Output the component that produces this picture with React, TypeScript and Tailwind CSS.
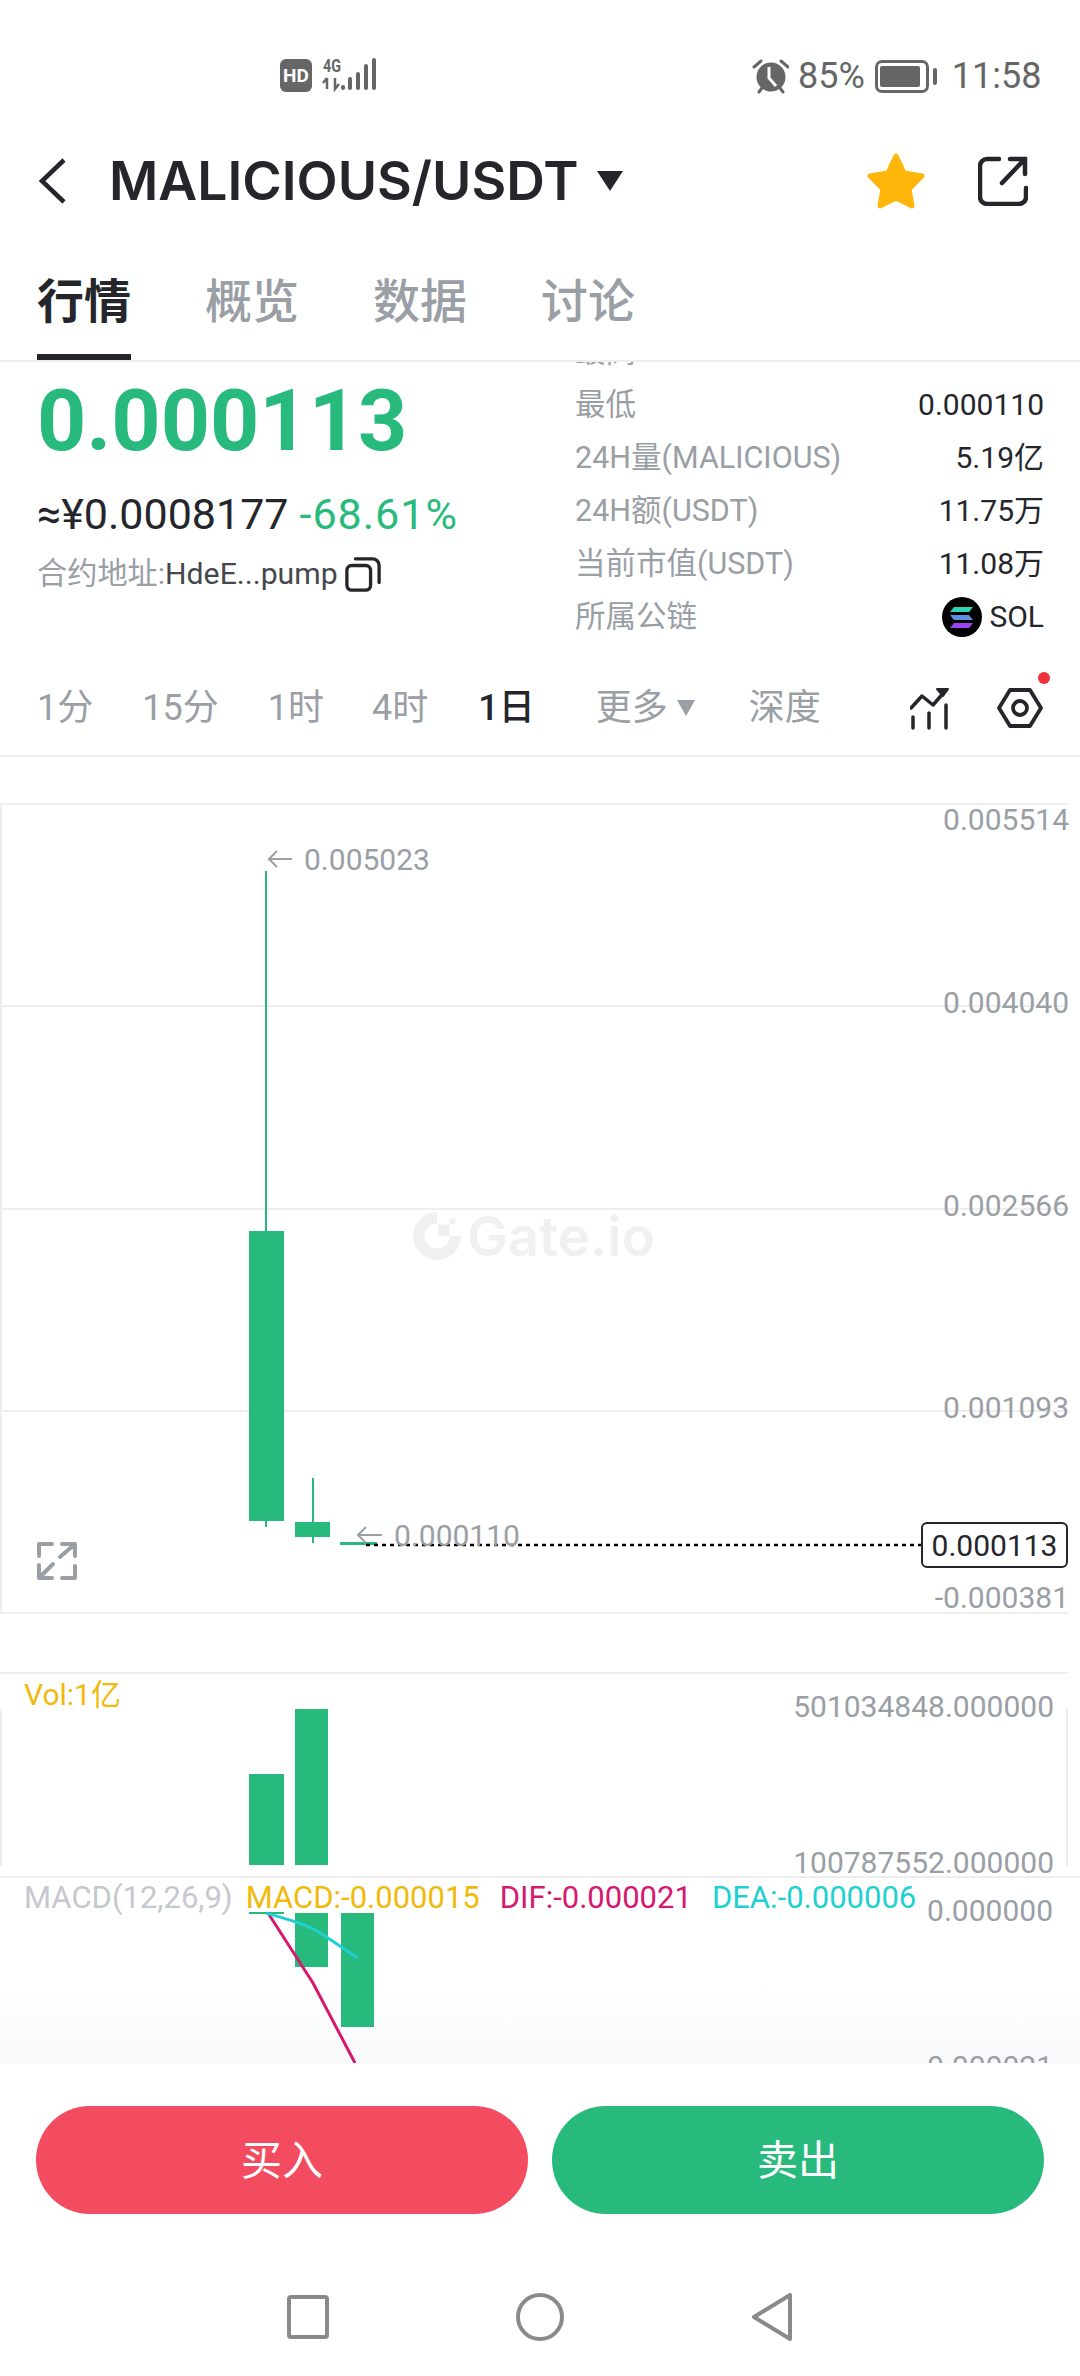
import React from 'react';

const tabs = ['行情', '概览', '数据', '讨论'];

const infoRows = [
  { label: '最高', value: '0.000360' },
  { label: '最低', value: '0.000110' },
  { label: '24H量(MALICIOUS)', value: '5.19亿' },
  { label: '24H额(USDT)', value: '11.75万' },
  { label: '当前市值(USDT)', value: '11.08万' },
];

const StatusBar = () => (
  <div className="relative h-[110px] shrink-0 text-[#666]">
    <div className="absolute left-[280px] top-[58px] flex items-center gap-[10px]">
      <div className="w-[32px] h-[33px] rounded-[6px] bg-[#666] text-white text-[19px] font-bold flex items-center justify-center leading-none">
        HD
      </div>
      <svg width="54" height="34" viewBox="0 0 54 34" fill="#666" className="overflow-visible">
        <text x="1" y="14" fontSize="19" fontWeight="700" fontFamily="Roboto" textLength="18" lengthAdjust="spacingAndGlyphs">4G</text>
        <path d="M5 20v11M1 25l4-5M13 20v11l4-5" fill="none" stroke="#666" strokeWidth="2.5" />
        <rect x="19" y="27" width="4" height="5" rx="2" />
        <rect x="26" y="19" width="4" height="13" rx="2" />
        <rect x="34" y="14" width="4" height="18" rx="2" />
        <rect x="42" y="6" width="4" height="26" rx="2" />
        <rect x="50" y="0" width="4" height="32" rx="2" />
      </svg>
    </div>
    <div className="absolute left-[752px] top-[57px] flex items-center h-[38px] text-[36px] leading-none">
      <svg width="37" height="36" viewBox="0 0 37 36" fill="none" className="mr-[9px]">
        <circle cx="19" cy="19" r="14.5" fill="#666" />
        <path d="M17 9v11l7 8" stroke="#fff" strokeWidth="3" />
        <path d="M2 9l7-6M36 9l-7-6M7 34l3-4M31 34l-3-4" stroke="#666" strokeWidth="3" strokeLinecap="round" />
      </svg>
      <span>85%</span>
      <div className="ml-[10px] w-[54px] h-[33px] border-[3px] border-[#666] rounded-[7px] px-[2px] py-[3px]">
        <div className="w-[40px] h-full bg-[#666] rounded-[2px]" />
      </div>
      <div className="ml-[4px] w-[4px] h-[17px] bg-[#666] rounded-[2px]" />
      <span className="ml-[15px]">11:58</span>
    </div>
  </div>
);

const Header = () => (
  <div className="h-[142px] shrink-0 flex items-center pl-[38px] pr-[52px]">
    <svg width="30" height="48" viewBox="0 0 30 48" fill="none">
      <path d="M26 3L4 24l22 21" stroke="#24262b" strokeWidth="4.5" />
    </svg>
    <span className="ml-[41px] text-[53.5px] font-semibold text-[#24262b] font-['Inter','Noto_Sans_CJK_SC',sans-serif]">
      MALICIOUS/USDT
    </span>
    <svg width="26" height="20" viewBox="0 0 26 20" className="ml-[18px]" fill="#24262b">
      <path d="M0 0h26L13 20z" />
    </svg>
    <div className="ml-auto flex items-center gap-[53px]">
      <svg width="58" height="56" viewBox="0 0 58 56">
        <path
          d="M29 3l8 17 18 3-13 13 3 17-16-8-16 8 3-17L3 23l18-3z"
          fill="#fdb609"
          stroke="#fdb609"
          strokeWidth="5"
          strokeLinejoin="round"
        />
      </svg>
      <svg width="50" height="50" viewBox="0 0 50 50" fill="none" stroke="#24262b" strokeWidth="4.5" strokeLinecap="round">
        <path d="M21 3H9a7 7 0 0 0-7 7v31a7 7 0 0 0 7 7h32a7 7 0 0 0 7-7V32" />
        <path d="M24 27L46 4M32 3h15v15" />
      </svg>
    </div>
  </div>
);

const Tabs = () => (
  <div className="relative h-[110px] shrink-0 border-b-2 border-[#eeeeee] pl-[37px] flex items-start gap-[74px] text-[47px] leading-[100px]">
    {tabs.map((tab, i) => (
      <div key={tab} className={i === 0 ? 'relative h-[108px] font-bold text-[#24262b]' : 'font-medium text-[#9a9ea5]'}>
        {tab}
        {i === 0 && <div className="absolute left-0 right-0 bottom-0 h-[6px] bg-[#24262b]" />}
      </div>
    ))}
  </div>
);

const SolIcon = () => (
  <svg width="40" height="40" viewBox="0 0 40 40">
    <circle cx="20" cy="20" r="20" fill="#000" />
    <path d="M12 10h19l-4 5H8z" fill="#2fd6b4" />
    <path d="M8 18h19l4 5H12z" fill="#5f8fe0" />
    <path d="M12 26h19l-4 5H8z" fill="#9a45f0" />
  </svg>
);

const PriceInfo = () => (
  <div className="h-[299px] shrink-0 overflow-hidden flex">
    <div className="w-[575px] pl-[37px] pt-[15px]">
      <div className="text-[86px] leading-[88px] font-bold text-[#27ba7c]">0.000113</div>
      <div className="mt-[26px] text-[43px] leading-[46px] flex">
        <span className="text-[#24262b]">≈¥0.0008177</span>
        <span className="ml-[11px] text-[#27ba7c] tracking-[1px]">-68.61%</span>
      </div>
      <div className="mt-[17px] flex items-center text-[30.2px] leading-[40px] text-[#9a9ea5]">
        <span>合约地址:</span>
        <span className="text-[#45474d]">HdeE...pump</span>
        <svg width="36" height="36" viewBox="0 0 38 38" fill="none" stroke="#24262b" strokeWidth="3.5" className="ml-[7px]">
          <rect x="2" y="10" width="25" height="26" rx="5" />
          <path d="M11 3h18a7 7 0 0 1 7 7v18" strokeLinecap="round" />
        </svg>
      </div>
    </div>
    <div className="w-[469px] -mt-[37px] text-[30.5px]">
      {infoRows.map((row) => (
        <div key={row.label} className="h-[53px] flex items-center justify-between">
          <span className="text-[#9a9ea5]">{row.label}</span>
          <span className="text-[#24262b] text-[30px]">{row.value}</span>
        </div>
      ))}
      <div className="h-[53px] flex items-center justify-between">
        <span className="text-[#9a9ea5]">所属公链</span>
        <span className="flex items-center gap-[7px] text-[#24262b] text-[30px]">
          <SolIcon />
          SOL
        </span>
      </div>
    </div>
  </div>
);

const Timeframes = () => (
  <div className="relative h-[96px] shrink-0 border-b-2 border-[#eeeeee] pl-[37px] flex items-center text-[36px] text-[#9a9ea5]">
    <span>1分</span>
    <span className="ml-[49px]">15分</span>
    <span className="ml-[49px]">1时</span>
    <span className="ml-[48px]">4时</span>
    <span className="ml-[50px] text-[#24262b] font-medium">1日</span>
    <span className="ml-[61px]">更多</span>
    <svg width="18" height="16" viewBox="0 0 18 16" fill="#9a9ea5" className="ml-[9px]">
      <path d="M0 0h18L9 16z" />
    </svg>
    <span className="ml-[54px]">深度</span>
    <div className="ml-auto mr-[37px] flex items-center gap-[47px]">
      <svg width="40" height="44" viewBox="0 0 40 44" fill="none" stroke="#24262b" strokeWidth="3.5" strokeLinecap="round" strokeLinejoin="round">
        <path d="M1 22L12 10l11 9L36 4" />
        <path d="M27 3h11l-5 7z" fill="#24262b" strokeWidth="2" />
        <path d="M3 31v11M19 27v15M36 19v23" />
      </svg>
      <div className="relative">
        <svg width="46" height="40" viewBox="0 0 46 40" fill="none" stroke="#24262b" strokeWidth="3.8" className="block">
          <path d="M13 2h20l11 18-11 18H13L2 20z" strokeLinejoin="round" />
          <circle cx="23" cy="20" r="7" />
        </svg>
        <div className="absolute -top-[16px] -right-[7px] w-[12px] h-[12px] rounded-full bg-[#ee3038]" />
      </div>
    </div>
  </div>
);

const AxisLabel = ({ y, text, right = 12 }: { y: number; text: string; right?: number }) => (
  <div className="absolute text-[30px] leading-[36px] text-[#9a9ea5] whitespace-nowrap" style={{ top: y - 18, right }}>
    {text}
  </div>
);

const Watermark = () => (
  <div className="absolute left-[411px] top-[406px] flex items-center text-[#f0f0f0]">
    <svg width="48" height="48" viewBox="0 0 50 50">
      <path d="M25 0v12a13 13 0 1 0 13 13h12A25 25 0 1 1 25 0z" fill="#f0f0f0" />
      <rect x="26" y="13" width="12" height="12" fill="#f0f0f0" />
      <rect x="38" y="7" width="6" height="6" fill="#f0f0f0" />
    </svg>
    <span className="ml-[6px] text-[54.5px] leading-[50px] font-semibold font-['Inter',sans-serif]">Gate.io</span>
  </div>
);

const MainChart = () => (
  <div className="relative h-[811px] w-[1068px] shrink-0 mt-[46px] border-l-2 border-t-2 border-[#eeeeee] flex flex-col">
    <div className="flex-1 border-b-2 border-[#eeeeee]" />
    <div className="flex-1 border-b-2 border-[#eeeeee]" />
    <div className="flex-1 border-b-2 border-[#eeeeee]" />
    <div className="flex-1 border-b-2 border-[#eeeeee]" />
    <Watermark />
    <svg className="absolute -left-[2px] -top-[2px]" width="1080" height="811" viewBox="0 803 1080 811" fill="none">
      <path d="M266 871V1527" stroke="#27ba7c" strokeWidth="2" />
      <rect x="249" y="1231" width="35" height="290" fill="#27ba7c" />
      <path d="M313 1478V1543" stroke="#27ba7c" strokeWidth="2" />
      <rect x="295" y="1522" width="35" height="15" fill="#27ba7c" />
      <rect x="340" y="1542" width="37" height="3" fill="#27ba7c" />
      <path d="M366 1545H921" stroke="#000" strokeWidth="2.5" strokeDasharray="4 4" />
      <path d="M292 859H269M277 851l-8 8 8 8" stroke="#9a9ea5" strokeWidth="2" />
      <path d="M382 1535H358M366 1527l-8 8 8 8" stroke="#9a9ea5" strokeWidth="2" />
      <path
        d="M39 1556v-12h13M60 1557l15-13M62 1544h13v12M53 1564l-14 14M39 1565v13h13M62 1578h13v-12"
        stroke="#9a9ea5"
        strokeWidth="4"
        strokeLinecap="round"
        strokeLinejoin="round"
      />
    </svg>
    <div className="absolute left-[302px] top-[34px] text-[30px] leading-[42px] text-[#9a9ea5]">0.005023</div>
    <div className="absolute left-[392px] top-[710px] text-[30px] leading-[42px] text-[#9a9ea5]">0.000110</div>
    <AxisLabel y={15} text="0.005514" right={-1} />
    <AxisLabel y={198} text="0.004040" right={-1} />
    <AxisLabel y={401} text="0.002566" right={-1} />
    <AxisLabel y={603} text="0.001093" right={-1} />
    <AxisLabel y={793} text="-0.000381" right={-1} />
    <div className="absolute right-0 top-[717px] h-[46px] w-[147px] rounded-[6px] border-2 border-[#24262b] bg-white flex items-center justify-center text-[30px] text-[#24262b]">
      0.000113
    </div>
  </div>
);

const VolChart = () => (
  <div className="relative h-[204px] w-[1068px] shrink-0 mt-[58px] border-t-2 border-[#eeeeee]">
    <div className="absolute left-[24px] top-[1px] text-[30px] leading-[40px] text-[#f0b90b]">Vol:1亿</div>
    <div className="absolute left-0 top-[35px] bottom-[10px] w-[2px] bg-[#eeeeee]" />
    <div className="absolute right-0 top-[35px] bottom-[10px] w-[2px] bg-[#eeeeee]" />
    <div className="absolute left-[249px] top-[100px] w-[35px] h-[91px] bg-[#27ba7c]" />
    <div className="absolute left-[295px] top-[35px] w-[33px] h-[156px] bg-[#27ba7c]" />
    <AxisLabel y={33} text="501034848.000000" right={14} />
    <AxisLabel y={189} text="100787552.000000" right={14} />
  </div>
);

const MacdChart = () => (
  <div className="relative h-[187px] w-[1080px] shrink-0 border-t-2 border-[#eeeeee] overflow-hidden bg-gradient-to-b from-white from-55% to-[#f8f9fb]">
    <div className="absolute left-[24px] top-0 flex text-[31px] leading-[40px] whitespace-nowrap">
      <span className="text-[#c5c8ce]">MACD(12,26,9)</span>
      <span className="ml-[13px] text-[#f0b90b]">MACD:-0.000015</span>
      <span className="ml-[20px] text-[#d6186f]">DIF:-0.000021</span>
      <span className="ml-[20px] text-[#1fd0d0]">DEA:-0.000006</span>
    </div>
    <AxisLabel y={33} text="0.000000" right={27} />
    <AxisLabel y={189} text="0.000021" right={27} />
    <svg className="absolute left-0 top-0" width="1080" height="187" viewBox="0 1878 1080 187" fill="none">
      <rect x="249" y="1912" width="35" height="2" fill="#27ba7c" />
      <rect x="295" y="1913" width="33" height="54" fill="#27ba7c" />
      <rect x="341" y="1913" width="33" height="114" fill="#27ba7c" />
      <path d="M268 1913L313 1983L355 2063" stroke="#d6186f" strokeWidth="3" />
      <path d="M266 1913C290 1920 310 1925 325 1936C335 1943 347 1950 357 1958" stroke="#1fd0d0" strokeWidth="3" />
    </svg>
  </div>
);

const TradeButtons = () => (
  <div className="h-[193px] shrink-0 flex items-start gap-[24px] pt-[43px] px-[36px]">
    <button className="flex-1 h-[108px] rounded-full bg-[#f34c60] text-white text-[41px] pt-[4px]">买入</button>
    <button className="flex-1 h-[108px] rounded-full bg-[#27ba7c] text-white text-[41px] pt-[4px]">卖出</button>
  </div>
);

const NavBar = () => (
  <div className="flex-1 relative flex items-start justify-center pt-[37px]">
    <svg width="42" height="44" viewBox="0 0 42 44" fill="none" stroke="#8a8a8a" strokeWidth="4" className="mt-[2px]">
      <rect x="2" y="2" width="38" height="40" rx="2" />
    </svg>
    <svg width="48" height="48" viewBox="0 0 48 48" fill="none" stroke="#8a8a8a" strokeWidth="4" className="ml-[187px]">
      <circle cx="24" cy="24" r="22" />
    </svg>
    <svg width="42" height="48" viewBox="0 0 42 48" fill="none" stroke="#8a8a8a" strokeWidth="4" strokeLinejoin="round" className="ml-[187px]">
      <path d="M39 2v44L3 24z" />
    </svg>
  </div>
);

export default function App() {
  return (
    <div className="w-[1080px] h-[2376px] overflow-hidden bg-white flex flex-col font-['Roboto','Noto_Sans_CJK_SC',sans-serif]">
      <StatusBar />
      <Header />
      <Tabs />
      <PriceInfo />
      <Timeframes />
      <MainChart />
      <VolChart />
      <MacdChart />
      <TradeButtons />
      <NavBar />
    </div>
  );
}
